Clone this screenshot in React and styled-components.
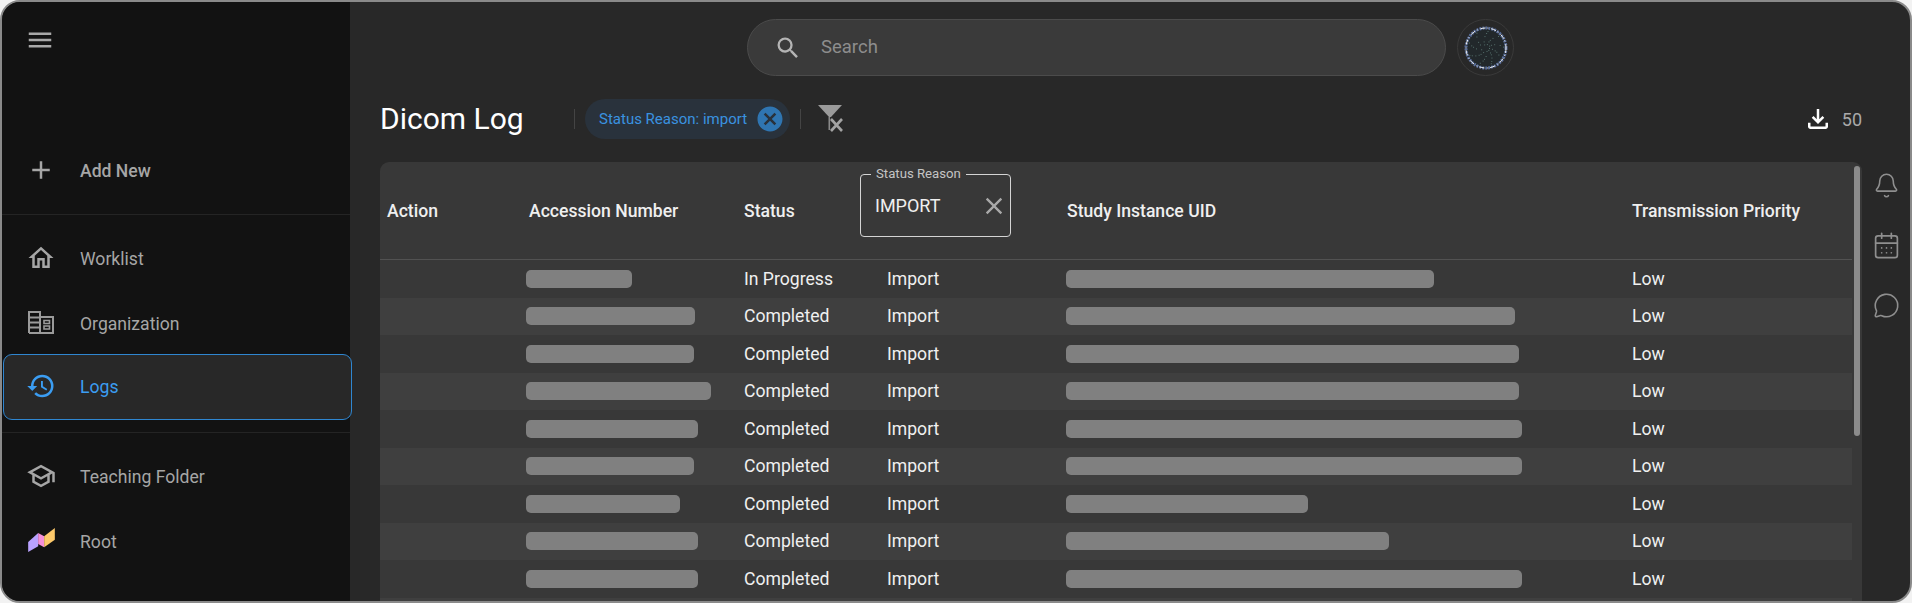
import React from "react";
import styled, { createGlobalStyle } from "styled-components";
import {
  MdMenu,
  MdAdd,
  MdOutlineHome,
  MdHistory,
  MdOutlineSchool,
  MdSearch,
  MdClose,
  MdCancel,
  MdOutlineFileDownload,
} from "react-icons/md";
import { Bell, CalendarDays, MessageCircle } from "lucide-react";

const GlobalStyle = createGlobalStyle`
  html, body {
    margin: 0;
    padding: 0;
    background: #f2f2f2;
    overflow: hidden;
  }
  * {
    box-sizing: border-box;
  }
`;

const Frame = styled.div`
  width: 1912px;
  height: 603px;
  display: flex;
  overflow: hidden;
  border: 2px solid #8a8a8a;
  border-radius: 20px;
  font-family: Roboto, "Liberation Sans", sans-serif;
  background: #282828;
`;

const Sidebar = styled.aside`
  width: 348px;
  flex-shrink: 0;
  background: #121212;
  display: flex;
  flex-direction: column;
`;

const MenuButton = styled.div`
  height: 137px;
  padding: 23px 0 0 23px;
  color: #a8a8a8;
  font-size: 30px;
  line-height: 0;
`;

const NavRow = styled.div`
  height: ${(p) => p.$height || 64.5}px;
  display: flex;
  align-items: center;
  flex-shrink: 0;
  padding-left: 23px;
  color: #a6a6a6;
  font-size: 17.6px;
  font-weight: ${(p) => (p.$bold ? 500 : 400)};
`;

const ActiveNavRow = styled(NavRow)`
  position: relative;
  height: 66px;
  margin: -2px -2px 0 1px;
  padding-left: 21px;
  border: 1px solid #2f86d0;
  border-radius: 9px;
  background: #282828;
  color: #3b9df2;
`;

const NavIcon = styled.span`
  width: 32px;
  height: 32px;
  margin: 0 23px 3px 0;
  display: flex;
  align-items: center;
  justify-content: center;
  font-size: 30px;
`;

const NavDivider = styled.div`
  height: 1px;
  flex-shrink: 0;
  background: #242424;
  margin: ${(p) => p.$margin};
`;

const Main = styled.main`
  flex: 1;
  min-width: 0;
  display: flex;
  flex-direction: column;
`;

const TopBar = styled.div`
  display: flex;
  align-items: center;
  gap: 11px;
  padding: 17px 0 0 397px;
`;

const SearchBox = styled.div`
  width: 699px;
  height: 57px;
  display: flex;
  align-items: center;
  padding-left: 26px;
  border: 1px solid #4b4b4b;
  border-radius: 29px;
  background: #3a3a3a;
  color: #b4b4b4;
  font-size: 28px;
`;

const SearchText = styled.span`
  margin-left: 19px;
  padding-bottom: 2px;
  font-size: 18.5px;
  color: #8d8d8d;
`;

const Avatar = styled.div`
  width: 57px;
  height: 57px;
  display: flex;
  align-items: center;
  justify-content: center;
  border: 1px solid #3a3a3a;
  border-radius: 50%;
`;

const TitleRow = styled.div`
  height: 40px;
  margin: 23px 48px 23px 30px;
  display: flex;
  align-items: center;
`;

const Title = styled.h1`
  width: 194px;
  margin: 0 0 2px;
  font-size: 30px;
  font-weight: 400;
  color: #fff;
`;

const VDivider = styled.div`
  width: 1px;
  height: 20px;
  background: #444;
`;

const Chip = styled.div`
  width: 205px;
  height: 40px;
  margin: 0 10px;
  display: flex;
  align-items: center;
  justify-content: space-between;
  padding: 0 5px 0 14px;
  border-radius: 20px;
  background: #29323c;
  color: #3a92e0;
  font-size: 15px;
  svg {
    color: #2f75b1;
    font-size: 30px;
  }
`;

const FilterIcon = styled.svg`
  width: 26px;
  height: 27px;
  margin: 0 0 2px 17px;
`;

const Spacer = styled.div`
  flex: 1;
`;

const Download = styled.div`
  display: flex;
  align-items: center;
  gap: 9px;
  color: #aaa;
  font-size: 18px;
  svg {
    color: #fff;
    font-size: 30px;
  }
`;

const Content = styled.div`
  flex: 1;
  min-height: 0;
  display: flex;
  padding-left: 30px;
`;

const Table = styled.div`
  position: relative;
  flex: 1;
  min-width: 0;
  background: #383838;
  border-radius: 9px 9px 0 0;
  padding-right: 10px;
`;

const Thumb = styled.div`
  position: absolute;
  top: 4px;
  right: 2px;
  width: 6px;
  height: 270px;
  border-radius: 3px;
  background: #8b8b8b;
`;

const HeaderRow = styled.div`
  display: grid;
  grid-template-columns: 142px 215px 116px 207px 565px 1fr;
  align-items: center;
  height: 98px;
  padding-left: 7px;
  border-bottom: 1px solid #525252;
  color: #efefef;
  font-size: 17.6px;
  font-weight: 500;
`;

const FilterBox = styled.div`
  position: relative;
  width: 151px;
  height: 63px;
  margin-top: -10px;
  padding: 15px 14px;
  display: flex;
  justify-content: space-between;
  border: 1px solid #d4d4d4;
  border-radius: 4px;
  font-size: 18px;
  font-weight: 400;
  line-height: 32px;
  svg {
    flex-shrink: 0;
    color: #a8a8a8;
    font-size: 28px;
    margin: 2px -12px 0 0;
  }
`;

const FilterLabel = styled.span`
  position: absolute;
  top: -9px;
  left: 10px;
  padding: 0 5px;
  background: #383838;
  color: #c4c4c4;
  font-size: 13.2px;
  line-height: 16px;
`;

const BodyRow = styled.div`
  display: grid;
  grid-template-columns: 142px 215px 116px 207px 565px 1fr;
  align-items: center;
  height: 37.5px;
  padding-left: 7px;
  color: #f0f0f0;
  font-size: 17.6px;
  &:nth-child(even) {
    background: #3f3f3f;
  }
`;

const Blur = styled.div`
  width: ${(p) => p.$width}px;
  height: 18px;
  margin-left: ${(p) => p.$shift}px;
  border-radius: 5px;
  background: #808080;
`;

const ReasonCell = styled.div`
  padding-left: 27px;
`;

const Rail = styled.div`
  width: 48px;
  flex-shrink: 0;
  padding-top: 10px;
  display: flex;
  flex-direction: column;
  align-items: center;
  gap: 32px;
  color: #8f8f8f;
`;

const rows = [
  { status: "In Progress", acc: 106, uid: 368 },
  { status: "Completed", acc: 169, uid: 449 },
  { status: "Completed", acc: 168, uid: 453 },
  { status: "Completed", acc: 185, uid: 453 },
  { status: "Completed", acc: 172, uid: 456 },
  { status: "Completed", acc: 168, uid: 456 },
  { status: "Completed", acc: 154, uid: 242 },
  { status: "Completed", acc: 172, uid: 323 },
  { status: "Completed", acc: 172, uid: 456 },
];

// speckles for the avatar, same every render
const specks = Array.from({ length: 46 }, (_, i) => {
  const a = i * 2.4;
  const r = 3 + ((i * 7) % 16);
  return { x: 22 + r * Math.cos(a), y: 22 + r * Math.sin(a) };
});

const AvatarArt = () => (
  <svg width="44" height="44" viewBox="0 0 44 44">
    <circle cx="22" cy="22" r="20" fill="#22282b" stroke="#5a6f9c" strokeWidth="3" strokeDasharray="2 1" />
    <circle cx="22" cy="22" r="20" fill="none" stroke="#f0f0f0" strokeWidth="1" strokeDasharray="5 2 1 3" />
    {specks.map((s, i) => (
      <rect key={i} x={s.x} y={s.y} width="1" height="1" fill="#55706c" />
    ))}
  </svg>
);

const OrgIcon = () => (
  <svg width="26" height="23" viewBox="0 0 26 23" fill="none" stroke="#9a9a9a" strokeWidth="2">
    <path d="M1 22V1h11v21M12 6h13v16H1" />
    <path d="M1 6.5h11M1 11.5h11M1 16.5h11" />
    <path d="M16 9.5h5.5v3H16zM16 15h5.5v3H16z" strokeWidth="1.6" />
  </svg>
);

const RootLogo = () => (
  <svg width="27" height="25" viewBox="0 0 80 75">
    <polygon points="0,72 0,42 30,15 30,55" fill="#b9a2ff" />
    <polygon points="30,15 48,25 48,58 30,48" fill="#f58fd8" />
    <polygon points="48,25 80,0 80,35 48,58" fill="#fdc96a" />
  </svg>
);

export default function App() {
  return (
    <Frame>
      <GlobalStyle />
      <Sidebar>
        <MenuButton>
          <MdMenu />
        </MenuButton>
        <NavRow $height={64} $bold>
          <NavIcon><MdAdd /></NavIcon>
          Add New
        </NavRow>
        <NavDivider $margin="11px 0 12px" />
        <NavRow>
          <NavIcon><MdOutlineHome /></NavIcon>
          Worklist
        </NavRow>
        <NavRow>
          <NavIcon><OrgIcon /></NavIcon>
          Organization
        </NavRow>
        <ActiveNavRow>
          <NavIcon><MdHistory /></NavIcon>
          Logs
        </ActiveNavRow>
        <NavDivider $margin="12px 0 12px" />
        <NavRow>
          <NavIcon><MdOutlineSchool /></NavIcon>
          Teaching Folder
        </NavRow>
        <NavRow>
          <NavIcon><RootLogo /></NavIcon>
          Root
        </NavRow>
      </Sidebar>
      <Main>
        <TopBar>
          <SearchBox>
            <MdSearch />
            <SearchText>Search</SearchText>
          </SearchBox>
          <Avatar>
            <AvatarArt />
          </Avatar>
        </TopBar>
        <TitleRow>
          <Title>Dicom Log</Title>
          <VDivider />
          <Chip>
            Status Reason: import
            <MdCancel />
          </Chip>
          <VDivider />
          <FilterIcon viewBox="0 0 26 27">
            <polygon points="0,0 24,0 13,12 11,12" fill="#9a9a9a" />
            <rect x="10.5" y="12" width="1.6" height="13" fill="#8a8a8a" />
            <path d="M13 14 L24 26 M24 14 L13 26" stroke="#a2a2a2" strokeWidth="2.6" />
          </FilterIcon>
          <Spacer />
          <Download>
            <MdOutlineFileDownload />
            50
          </Download>
        </TitleRow>
        <Content>
          <Table>
            <Thumb />
            <HeaderRow>
              <div>Action</div>
              <div>Accession Number</div>
              <div>Status</div>
              <FilterBox>
                <FilterLabel>Status Reason</FilterLabel>
                IMPORT
                <MdClose />
              </FilterBox>
              <div>Study Instance UID</div>
              <div>Transmission Priority</div>
            </HeaderRow>
            <div>
              {rows.map((row, i) => (
                <BodyRow key={i}>
                  <div />
                  <Blur $width={row.acc} $shift={-3} />
                  <div>{row.status}</div>
                  <ReasonCell>Import</ReasonCell>
                  <Blur $width={row.uid} $shift={-1} />
                  <div>Low</div>
                </BodyRow>
              ))}
              <BodyRow />
            </div>
          </Table>
          <Rail>
            <Bell size={27} strokeWidth={1.4} />
            <CalendarDays size={29} strokeWidth={1.4} />
            <MessageCircle size={27} strokeWidth={1.4} />
          </Rail>
        </Content>
      </Main>
    </Frame>
  );
}
